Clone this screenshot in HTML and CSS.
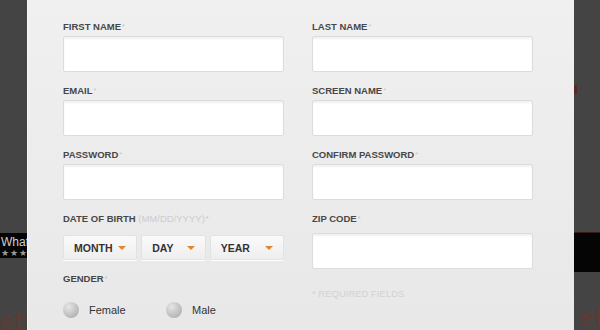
FILE: index.html
```html
<!DOCTYPE html>
<html lang="en">
<head>
    <meta charset="UTF-8">
    <title>Sign Up</title>
    <link rel="stylesheet" href="styles.css">
</head>
<body>
<div class="page">

    <!-- Background page peeking out on the left -->
    <div class="side side-left">
        <div class="band band-left">
            <div class="band-title">What</div>
            <div class="band-stars">&#9733;&#9733;&#9733;</div>
        </div>
        <div class="side-text">eth</div>
    </div>

    <!-- Sign up form -->
    <div class="modal">
        <div class="form-grid">
            <div class="field">
                <label class="label">First Name<span class="req">*</span></label>
                <div class="input"></div>
            </div>
            <div class="field">
                <label class="label">Last Name<span class="req">*</span></label>
                <div class="input"></div>
            </div>

            <div class="field">
                <label class="label">Email<span class="req">*</span></label>
                <div class="input"></div>
            </div>
            <div class="field">
                <label class="label">Screen Name<span class="req">*</span></label>
                <div class="input"></div>
            </div>

            <div class="field">
                <label class="label">Password<span class="req">*</span></label>
                <div class="input"></div>
            </div>
            <div class="field">
                <label class="label">Confirm Password<span class="req">*</span></label>
                <div class="input"></div>
            </div>

            <div class="field">
                <label class="label">Date of Birth <span class="hint">(MM/DD/YYYY)</span><span class="req">*</span></label>
                <div class="selects">
                    <div class="select sel-month">Month<span class="arrow"></span></div>
                    <div class="select sel-day">Day<span class="arrow"></span></div>
                    <div class="select sel-year">Year<span class="arrow"></span></div>
                </div>
                <label class="label label-gender">Gender<span class="req">*</span></label>
                <div class="radios">
                    <div class="radio"><span class="dot"></span>Female</div>
                    <div class="radio"><span class="dot"></span>Male</div>
                </div>
            </div>
            <div class="field">
                <label class="label label-zip">Zip Code<span class="req">*</span></label>
                <div class="input"></div>
                <div class="required-note">* Required Fields</div>
            </div>
        </div>
    </div>

    <!-- Background page peeking out on the right -->
    <div class="side side-right">
        <div class="red-mark"></div>
        <div class="band band-right"></div>
        <div class="side-text side-text-right">et S</div>
    </div>

</div>
</body>
</html>
```

FILE: styles.css
```css
/* General Styles */
body {
    margin: 0;
    background-color: #444;
    font-family: 'Liberation Sans', Arial, sans-serif;
    color: #444;
    overflow: hidden;
}

.page {
    display: flex;
    height: 330px;
}

/* Side strips (the page behind the modal) */
.side {
    width: 27px;
    flex: none;
    overflow: hidden;
    background-color: #444;
    display: flex;
    flex-direction: column;
}

.side-right {
    width: 26px;
}

.band {
    background-color: #050505;
}

.band-left {
    margin-top: 233px;
    height: 27px;
    padding-left: 1px;
    white-space: nowrap;
}

.band-title {
    font-size: 12px;
    line-height: 13px;
    color: #cfcfcf;
    padding-top: 3px;
}

.band-stars {
    font-size: 9px;
    line-height: 9px;
    color: #9a9a9a;
    letter-spacing: 1px;
}

.side-text {
    margin-top: 52px;
    font-size: 24px;
    line-height: 24px;
    color: #633a31;
    font-family: 'DejaVu Sans', sans-serif;
    white-space: nowrap;
}

.side-text-right {
    margin-top: 34px;
    padding-left: 6px;
}

.red-mark {
    width: 3px;
    height: 10px;
    margin-top: 85px;
    background-color: #5a2b25;
}

.band-right {
    margin-top: 138px;
    height: 44px;
    border-top: 1px solid #3a1d18;
}

/* Modal */
.modal {
    width: 547px;
    flex: none;
    box-sizing: border-box;
    padding: 20px 0 0 35px;
    background: linear-gradient(#f0f0f0, #e8e8e8);
    border-left: 1px solid #f7f7f7;
}

.form-grid {
    display: grid;
    grid-template-columns: 221px 221px;
    column-gap: 28px;
    row-gap: 12px;
}

.label {
    display: block;
    font-size: 9.5px;
    line-height: 14px;
    font-weight: bold;
    text-transform: uppercase;
    color: #474747;
    margin-bottom: 2px;
}

.req {
    font-size: 7px;
    font-weight: normal;
    color: #c4c4c4;
    vertical-align: top;
    margin-left: 1px;
}

.hint {
    font-weight: normal;
    color: #cdcdcd;
}

.input {
    height: 34px;
    background-color: #fff;
    border: 1px solid #dcdcdc;
    border-radius: 2px;
    box-shadow: inset 0 2px 2px rgba(0, 0, 0, 0.06);
}

.label-zip {
    margin-bottom: 7px;
}

.required-note {
    margin-top: 19px;
    font-size: 9.5px;
    text-transform: uppercase;
    color: #d2d2d2;
}

/* Date selects */
.selects {
    display: flex;
    gap: 4px;
    margin-top: 9px;
}

.select {
    height: 25px;
    box-sizing: border-box;
    display: flex;
    align-items: center;
    justify-content: space-between;
    padding: 1px 10px 0 10px;
    font-size: 10.5px;
    font-weight: bold;
    text-transform: uppercase;
    color: #333;
    background: linear-gradient(#fafafa, #eeeeee);
    border: 1px solid #e2e2e2;
    border-radius: 2px;
    box-shadow: 0 1px 0 #fff;
}

.sel-month { width: 75px; }
.sel-day { width: 65px; }
.sel-year { width: 75px; }

.arrow {
    width: 0;
    height: 0;
    border-left: 4px solid transparent;
    border-right: 4px solid transparent;
    border-top: 4px solid #e3842f;
}

.label-gender {
    margin-top: 12px;
}

/* Gender radios */
.radios {
    display: flex;
    margin-top: 16px;
}

.radio {
    display: flex;
    align-items: center;
    width: 103px;
    font-size: 11px;
    color: #333;
}

.dot {
    width: 16px;
    height: 16px;
    border-radius: 50%;
    margin-right: 10px;
    background: radial-gradient(circle at 35% 30%, #e6e6e6, #b4b4b4 75%);
}
```
